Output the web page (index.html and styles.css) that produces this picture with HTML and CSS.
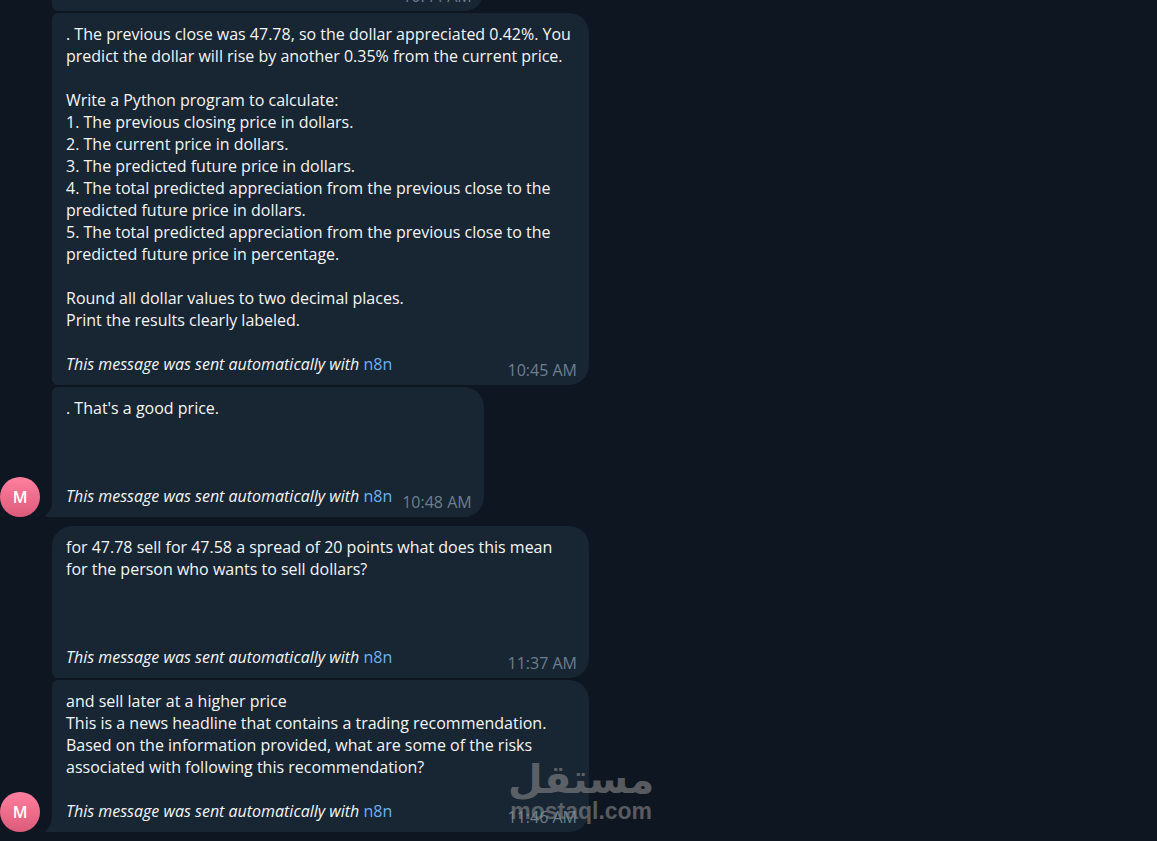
FILE: index.html
```html
<!DOCTYPE html>
<html lang="en">
<head>
    <meta charset="UTF-8">
    <meta name="viewport" content="width=device-width, initial-scale=1.0">
    <title>Chat</title>
    <link rel="stylesheet" href="styles.css">
</head>
<body>
    <main class="chat">
        <section class="group">
            <div class="messages">
                <article class="bubble first">
                    <footer class="meta">
                        <em>This message was sent automatically with <a href="#">n8n</a></em>
                        <time>10:44 AM</time>
                    </footer>
                </article>

                <article class="bubble">
                    <p>. The previous close was 47.78, so the dollar appreciated 0.42%. You predict the dollar will rise by another 0.35% from the current price.

Write a Python program to calculate:
1. The previous closing price in dollars.
2. The current price in dollars.
3. The predicted future price in dollars.
4. The total predicted appreciation from the previous close to the predicted future price in dollars.
5. The total predicted appreciation from the previous close to the predicted future price in percentage.

Round all dollar values to two decimal places.
Print the results clearly labeled.</p>
                    <footer class="meta">
                        <em>This message was sent automatically with <a href="#">n8n</a></em>
                        <time>10:45 AM</time>
                    </footer>
                </article>

                <article class="bubble last">
                    <p class="spaced">. That's a good price.</p>
                    <footer class="meta">
                        <em>This message was sent automatically with <a href="#">n8n</a></em>
                        <time>10:48 AM</time>
                    </footer>
                    <svg class="tail" viewBox="0 0 8 16"><path d="M8 0V16H1C0 16 0 15 1 14Q7 10 7 0Z"/></svg>
                </article>
            </div>
            <div class="avatar">M</div>
        </section>

        <section class="group">
            <div class="messages">
                <article class="bubble first">
                    <p class="spaced">for 47.78 sell for 47.58 a spread of 20 points what does this mean for the person who wants to sell dollars?</p>
                    <footer class="meta">
                        <em>This message was sent automatically with <a href="#">n8n</a></em>
                        <time>11:37 AM</time>
                    </footer>
                </article>

                <article class="bubble last">
                    <p>and sell later at a higher price
This is a news headline that contains a trading recommendation. Based on the information provided, what are some of the risks associated with following this recommendation?</p>
                    <footer class="meta">
                        <em>This message was sent automatically with <a href="#">n8n</a></em>
                        <time>11:46 AM</time>
                    </footer>
                    <svg class="tail" viewBox="0 0 8 16"><path d="M8 0V16H1C0 16 0 15 1 14Q7 10 7 0Z"/></svg>
                </article>
            </div>
            <div class="avatar">M</div>
        </section>
    </main>

    <div class="watermark">
        <span class="watermark-name" lang="ar">مستقل</span>
        <span class="watermark-site">mostaql.com</span>
    </div>
</body>
</html>
```
FILE: styles.css
```css
body {
    margin: 0;
    background-color: #0e1621;
    color: #f5f5f5;
    font-family: "Open Sans", "Noto Sans", sans-serif;
    font-size: 16px;
    line-height: 22px;
}

/* newest messages stay at the bottom, older ones run off the top */
.chat {
    box-sizing: border-box;
    height: 100vh;
    overflow: hidden;
    display: flex;
    flex-direction: column;
    justify-content: flex-end;
    gap: 9px;
    padding-bottom: 9px;
}

.group {
    display: flex;
    flex-direction: row-reverse;
    justify-content: flex-end;
    align-items: flex-end;
    gap: 12px;
    flex-shrink: 0;
}

.messages {
    display: flex;
    flex-direction: column;
    align-items: flex-start;
    gap: 2px;
}

.bubble {
    position: relative;
    box-sizing: border-box;
    max-width: 537px;
    padding: 10px 12px 10px 14px;
    background-color: #182533;
    border-radius: 6px 20px 20px 6px;
}

.bubble.first {
    border-top-left-radius: 20px;
}

.bubble.last {
    border-bottom-left-radius: 0;
}

.bubble p {
    margin: 0 0 22px;
    white-space: pre-line;
}

.bubble p.spaced {
    margin-bottom: 66px;
}

.meta {
    display: flex;
    justify-content: space-between;
    gap: 10px;
}

.meta a {
    color: #6ab3f3;
    font-style: normal;
    text-decoration: none;
}

.meta time {
    height: 16px;
    padding-top: 6px;
    margin-bottom: -6px;
    color: #6d7f8f;
    white-space: nowrap;
}

.tail {
    position: absolute;
    left: -7px;
    bottom: 0;
    width: 8px;
    height: 16px;
    fill: #182533;
}

.avatar {
    width: 40px;
    height: 40px;
    border-radius: 50%;
    background-image: linear-gradient(#ff7f9f, #dc5b7b);
    color: #fff;
    font-weight: 600;
    line-height: 40px;
    text-align: center;
}

.watermark {
    position: absolute;
    left: 508px;
    top: 760px;
    display: flex;
    flex-direction: column;
    align-items: center;
    color: #888;
    opacity: 0.6;
    font-weight: bold;
    pointer-events: none;
}

.watermark-name {
    font-family: "DejaVu Sans", sans-serif;
    font-size: 40px;
    line-height: 38px;
}

.watermark-site {
    font-family: "Liberation Sans", Arial, sans-serif;
    font-size: 23px;
    line-height: 26px;
}
```
